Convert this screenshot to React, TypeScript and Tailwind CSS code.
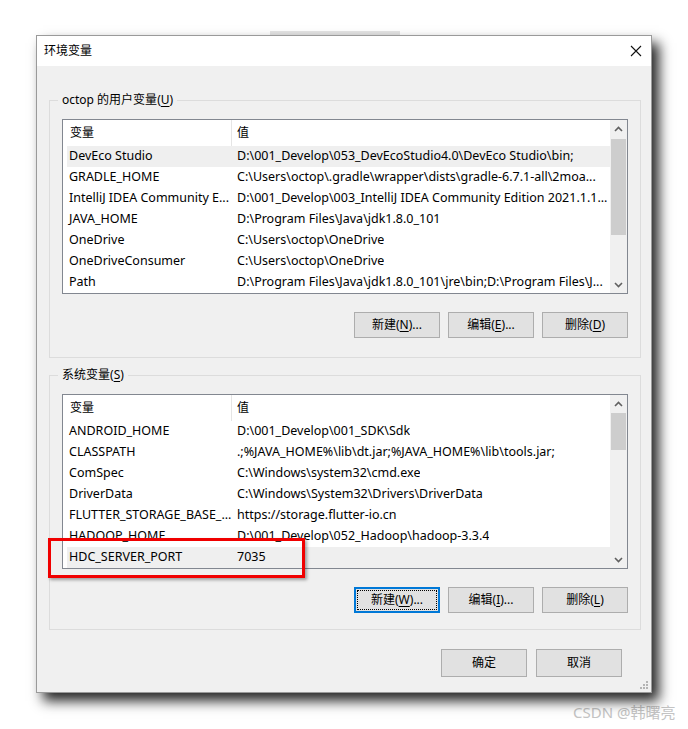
import React from "react";

type Row = { name: string; value: string; selected?: boolean };

const userVars: Row[] = [
  { name: "DevEco Studio", value: "D:\\001_Develop\\053_DevEcoStudio4.0\\DevEco Studio\\bin;", selected: true },
  { name: "GRADLE_HOME", value: "C:\\Users\\octop\\.gradle\\wrapper\\dists\\gradle-6.7.1-all\\2moa..." },
  { name: "IntelliJ IDEA Community E...", value: "D:\\001_Develop\\003_IntelliJ IDEA Community Edition 2021.1.1..." },
  { name: "JAVA_HOME", value: "D:\\Program Files\\Java\\jdk1.8.0_101" },
  { name: "OneDrive", value: "C:\\Users\\octop\\OneDrive" },
  { name: "OneDriveConsumer", value: "C:\\Users\\octop\\OneDrive" },
  { name: "Path", value: "D:\\Program Files\\Java\\jdk1.8.0_101\\jre\\bin;D:\\Program Files\\J..." },
];

const sysVars: Row[] = [
  { name: "ANDROID_HOME", value: "D:\\001_Develop\\001_SDK\\Sdk" },
  { name: "CLASSPATH", value: ".;%JAVA_HOME%\\lib\\dt.jar;%JAVA_HOME%\\lib\\tools.jar;" },
  { name: "ComSpec", value: "C:\\Windows\\system32\\cmd.exe" },
  { name: "DriverData", value: "C:\\Windows\\System32\\Drivers\\DriverData" },
  { name: "FLUTTER_STORAGE_BASE_...", value: "https://storage.flutter-io.cn" },
  { name: "HADOOP_HOME", value: "D:\\001_Develop\\052_Hadoop\\hadoop-3.3.4" },
  { name: "HDC_SERVER_PORT", value: "7035", selected: true },
];

function Chevron({ up }: { up?: boolean }) {
  return (
    <svg width="9" height="6" viewBox="0 0 9 6">
      <path
        d={up ? "M1 5 L4.5 1.5 L8 5" : "M1 1 L4.5 4.5 L8 1"}
        fill="none"
        stroke="#606060"
        strokeWidth="1.6"
      />
    </svg>
  );
}

function VarList({ rows, thumbTop, thumbH }: { rows: Row[]; thumbTop: number; thumbH: number }) {
  return (
    <div className="flex h-[175px] w-[566px] border border-[#828790] bg-white">
      <div className="flex min-w-0 flex-1 flex-col overflow-hidden">
        <div className="flex h-[26px] shrink-0 items-center">
          <div className="flex h-full w-[169px] items-center border-r border-[#e5e5e5] pl-[7px]">变量</div>
          <div className="pl-[5px]">值</div>
        </div>
        {rows.map((r) => (
          <div
            key={r.name}
            className={`ml-[4px] flex h-[21px] shrink-0 items-center whitespace-nowrap text-[12.5px] ${r.selected ? "bg-[#efefef]" : ""}`}
          >
            <div className="w-[170px] shrink-0 overflow-hidden pl-[2px]">{r.name}</div>
            <div className="overflow-hidden">{r.value}</div>
          </div>
        ))}
      </div>
      <div className="flex w-[17px] shrink-0 flex-col bg-[#f0f0f0]">
        <div className="flex h-[17px] items-center justify-center">
          <Chevron up />
        </div>
        <div className="flex-1 px-[1px]">
          <div className="bg-[#cdcdcd]" style={{ marginTop: thumbTop, height: thumbH }} />
        </div>
        <div className="flex h-[17px] items-center justify-center">
          <Chevron />
        </div>
      </div>
    </div>
  );
}

function Btn({ label, k, rest, focused }: { label: string; k: string; rest: string; focused?: boolean }) {
  return (
    <div
      className={`flex h-[26px] w-[86px] items-center justify-center bg-[#e1e1e1] ${
        focused ? "border-2 border-[#0078d7] p-[1px]" : "border border-[#adadad]"
      }`}
    >
      <div className={`flex h-full w-full items-center justify-center ${focused ? "border border-dotted border-black" : ""}`}>
        {label}(<span className="underline underline-offset-2">{k}</span>){rest}
      </div>
    </div>
  );
}

function Group({ title, k, children }: { title: string; k: string; children: React.ReactNode }) {
  return (
    <fieldset className="ml-[12px] w-[591px] border border-[#dcdcdc] px-[12px]">
      <legend className="ml-[-4px] px-[4px] leading-[14px]">
        {title}(<span className="underline underline-offset-2">{k}</span>)
      </legend>
      {children}
    </fieldset>
  );
}

export default function App() {
  return (
    <div
      className="relative h-[729px] w-[688px] overflow-hidden bg-white pl-[36px] pt-[35px] text-[12px] text-black"
      style={{ fontFamily: '"Noto Sans", "Noto Sans CJK SC", sans-serif' }}
    >
      <div className="absolute left-[270px] top-[31px] h-[4px] w-[130px] bg-[#e4e4e4]" />
      <div className="relative flex h-[658px] w-[616px] flex-col border border-[#9a9a9a] bg-[#f0f0f0] shadow-[7px_8px_12px_rgba(0,0,0,0.85)]">
        <div className="flex h-[30px] shrink-0 items-center justify-between bg-white pl-[7px] pr-[9px]">
          <span className="text-[12px]">环境变量</span>
          <svg width="12" height="12" viewBox="0 0 12 12">
            <path d="M1 1 L11 11 M11 1 L1 11" stroke="#111" strokeWidth="1.1" />
          </svg>
        </div>

        <div className="mt-[27px]">
          <Group title="octop 的用户变量" k="U">
            <div className="pt-[12px]">
              <VarList rows={userVars} thumbTop={2} thumbH={96} />
            </div>
            <div className="flex justify-end gap-[8px] pb-[19px] pt-[18px]">
              <Btn label="新建" k="N" rest="..." />
              <Btn label="编辑" k="E" rest="..." />
              <Btn label="删除" k="D" rest="" />
            </div>
          </Group>
        </div>

        <div className="mt-[10px]">
          <Group title="系统变量" k="S">
            <div className="pt-[12px]">
              <VarList rows={sysVars} thumbTop={1} thumbH={37} />
            </div>
            <div className="flex justify-end gap-[8px] pb-[16px] pt-[18px]">
              <Btn label="新建" k="W" rest="..." focused />
              <Btn label="编辑" k="I" rest="..." />
              <Btn label="删除" k="L" rest="" />
            </div>
          </Group>
        </div>

        <div className="mt-[19px] flex justify-end gap-[9px] pr-[29px]">
          <div className="flex h-[28px] w-[86px] items-center justify-center border border-[#adadad] bg-[#e1e1e1]">确定</div>
          <div className="flex h-[28px] w-[86px] items-center justify-center border border-[#adadad] bg-[#e1e1e1]">取消</div>
        </div>

        <div className="absolute bottom-[3px] right-[3px] grid grid-cols-3 gap-[1px]">
          {[0, 0, 1, 0, 1, 1, 1, 1, 1].map((v, i) => (
            <div key={i} className={`h-[2px] w-[2px] ${v ? "bg-[#b4b4b4]" : ""}`} />
          ))}
        </div>

        <div className="absolute left-[11px] top-[502px] h-[40px] w-[257px] border-[3px] border-[#f00000] shadow-[2px_2px_3px_rgba(0,0,0,0.35)]" />
      </div>

      <div className="pl-[537px] pt-[8px] text-[15px] text-[#c4c4c4] [text-shadow:0_0_2px_#fff]">
        CSDN @韩曙亮
      </div>
    </div>
  );
}
